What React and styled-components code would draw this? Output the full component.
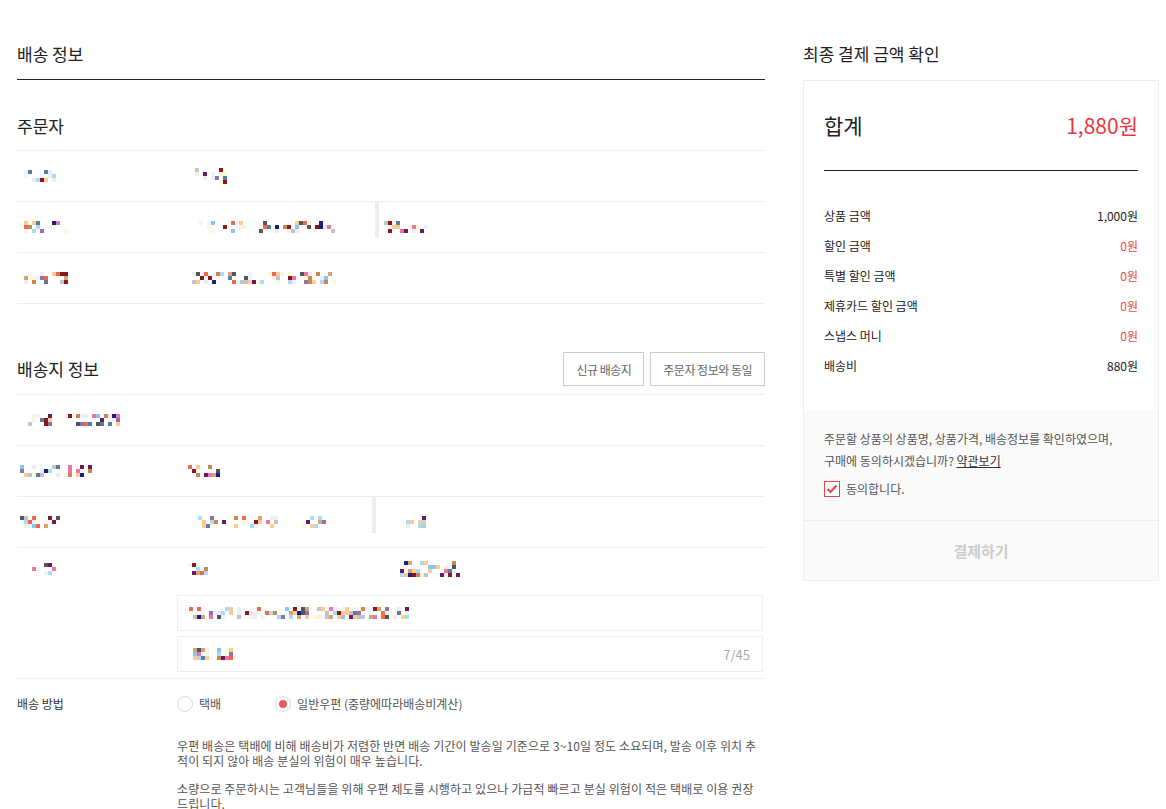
import React from 'react';
import styled, { createGlobalStyle } from 'styled-components';

const GlobalStyle = createGlobalStyle`
  html, body {
    margin: 0;
    padding: 0;
    background: #fff;
  }
  body {
    font-family: "Noto Sans CJK KR", "Noto Sans", sans-serif;
    color: #222;
  }
  * {
    box-sizing: border-box;
  }
`;

const palette = [
  '#8ac4f0', '#555555', '#f06848', '#fff6d6', '#ffcc90', '#1c1c8c',
  '#c4c4c4', '#6a1a60', '#8a1a1a', '#d8a474', '#5a7aa8', '#ec74a4',
  '#a8dcf8', '#c88850', '#9070b0', '#eeeeee', '#e8f4ff', '#f4f4f4',
  '#fff6d6', '#a8dcf8', '#ffcc90', '#eeeeee'
];

const makeRand = seed => {
  let a = seed * 9301 + 49297;
  return () => {
    a |= 0;
    a = (a + 0x6d2b79f5) | 0;
    let t = Math.imul(a ^ (a >>> 15), 1 | a);
    t = (t + Math.imul(t ^ (t >>> 7), 61 | t)) ^ t;
    return ((t ^ (t >>> 14)) >>> 0) / 4294967296;
  };
};

const Page = styled.div`
  display: flex;
  gap: 38px;
  padding: 42px 0 0 17px;
  width: 1166px;
  height: 809px;
  overflow: hidden;
`;

const Left = styled.div`
  width: 748px;
  flex-shrink: 0;
`;

const Right = styled.div`
  width: 356px;
  flex-shrink: 0;
`;

const PageTitle = styled.h2`
  margin: 0;
  font-size: 17px;
  font-weight: 400;
  line-height: 24px;
  color: #222;
  padding-bottom: ${p => (p.$line ? '13px' : '14px')};
  border-bottom: ${p => (p.$line ? '1px solid #222' : 'none')};
`;

const SectionTitle = styled.h3`
  margin: 0;
  font-size: 17px;
  font-weight: 400;
  line-height: 24px;
  color: #222;
`;

const OrdererHead = styled.div`
  margin-top: 34px;
  padding-bottom: 12px;
  border-bottom: 1px solid #eee;
`;

const ShipHead = styled.div`
  margin-top: 48px;
  display: flex;
  align-items: center;
  justify-content: space-between;
  padding-bottom: 8px;
  border-bottom: 1px solid #eee;
`;

const ButtonGroup = styled.div`
  display: flex;
  gap: 6px;
`;

const GhostButton = styled.button`
  height: 34px;
  padding: 0 12px;
  border: 1px solid #ccc;
  background: #fff;
  font-family: inherit;
  font-size: 12px;
  letter-spacing: -0.5px;
  color: #666;
  cursor: pointer;
`;

const Row = styled.div`
  display: grid;
  grid-template-columns: 160px 1fr;
  align-items: center;
  height: 51px;
  border-bottom: 1px solid #eee;
`;

const LabelCell = styled.div`
  padding-left: ${p => p.$pad || 7}px;
  display: flex;
  align-items: center;
  height: ${p => (p.$h ? `${p.$h}px` : 'auto')};
`;

const ValueCell = styled.div`
  display: flex;
  align-items: center;
  height: 100%;
  padding-left: ${p => p.$pad || 18}px;
`;

const Gap = styled.span`
  display: inline-block;
  width: ${p => p.$w}px;
  flex-shrink: 0;
`;

const Divider = styled.span`
  display: inline-block;
  width: 4px;
  height: 36px;
  background: #eee;
  align-self: flex-start;
`;

const AddressBlock = styled.div`
  display: grid;
  grid-template-columns: 160px 1fr;
  padding-bottom: 6px;
  border-bottom: 1px solid #eee;
`;

const AddressFields = styled.div`
  display: flex;
  flex-direction: column;
  gap: 5px;
  padding-right: 2px;
`;

const ZipLine = styled.div`
  height: 42px;
  display: flex;
  align-items: center;
  padding-left: 11px;
`;

const InputBox = styled.div`
  height: 36px;
  border: 1px solid #eee;
  display: flex;
  align-items: center;
  justify-content: space-between;
  padding: 0 12px 0 ${p => p.$pad || 11}px;
`;

const Counter = styled.span`
  font-size: 13px;
  color: #aaa;
`;

const MethodRow = styled.div`
  display: grid;
  grid-template-columns: 160px 1fr;
  align-items: center;
  height: 49px;
`;

const Label = styled.span`
  font-size: 12px;
  color: #333;
`;

const RadioGroup = styled.div`
  display: flex;
  align-items: center;
  gap: 54px;
`;

const RadioItem = styled.label`
  display: flex;
  align-items: center;
  gap: 6px;
  font-size: 12px;
  color: #555;
`;

const RadioCircle = styled.span`
  width: 16px;
  height: 16px;
  border-radius: 50%;
  border: 1px solid #ddd;
  background: #fff;
  display: flex;
  align-items: center;
  justify-content: center;
  &::after {
    content: '';
    width: 8px;
    height: 8px;
    border-radius: 50%;
    background: ${p => (p.$on ? '#e85a5a' : 'transparent')};
  }
`;

const Notice = styled.div`
  margin: 10px 0 0 160px;
  font-size: 12px;
  line-height: 15px;
  letter-spacing: 0.1px;
  color: #555;
  word-break: break-all;
  p {
    margin: 0 0 13px;
  }
`;

const SummaryBox = styled.div`
  border: 1px solid #eee;
  background: #fff;
`;

const SummaryInner = styled.div`
  padding: 0 20px;
`;

const TotalRow = styled.div`
  display: flex;
  justify-content: space-between;
  align-items: center;
  padding: 30px 0;
  line-height: 29px;
  border-bottom: 1px solid #222;
`;

const TotalLabel = styled.span`
  font-size: 21px;
  color: #222;
`;

const TotalValue = styled.span`
  font-size: 21px;
  color: #e8383d;
`;

const PriceList = styled.div`
  padding: 29px 0 30px;
`;

const PriceRow = styled.div`
  display: flex;
  justify-content: space-between;
  align-items: center;
  height: 30px;
  font-size: 12px;
  color: #222;
`;

const PriceValue = styled.span`
  color: ${p => (p.$red ? '#e84a4a' : '#222')};
`;

const AgreeArea = styled.div`
  background: #fafafa;
  padding: 18px 20px 23px;
`;

const AgreeText = styled.div`
  font-size: 12px;
  line-height: 22px;
  color: #555;
  a {
    color: #333;
    text-decoration: underline;
  }
`;

const CheckRow = styled.label`
  display: flex;
  align-items: center;
  gap: 6px;
  margin-top: 8px;
  font-size: 12px;
  color: #555;
`;

const CheckBox = styled.span`
  width: 16px;
  height: 16px;
  border: 1px solid #e84a4a;
  background: #fff;
  display: flex;
  align-items: center;
  justify-content: center;
`;

const PayButton = styled.button`
  display: block;
  width: 100%;
  height: 60px;
  border: none;
  border-top: 1px solid #eee;
  background: #fafafa;
  font-family: inherit;
  font-size: 15px;
  font-weight: 700;
  color: #ccc;
`;

const MosaicGrid = styled.span`
  display: inline-grid;
  grid-template-columns: repeat(${p => p.$cols}, 4px);
  grid-auto-rows: 4px;
  flex-shrink: 0;
`;

// pixelated placeholder for the blurred-out personal data
const Mosaic = ({ cols, rows = 3, seed, fill = 0.55 }) => {
  const rand = makeRand(seed);
  const cells = [];
  for (let i = 0; i < cols * rows; i++) {
    const on = rand() < fill;
    const c = palette[Math.floor(rand() * palette.length)];
    cells.push(<span key={i} style={{ background: on ? c : 'transparent' }} />);
  }
  return <MosaicGrid $cols={cols}>{cells}</MosaicGrid>;
};

const prices = [
  { label: '상품 금액', value: '1,000원' },
  { label: '할인 금액', value: '0원', red: true },
  { label: '특별 할인 금액', value: '0원', red: true },
  { label: '제휴카드 할인 금액', value: '0원', red: true },
  { label: '스냅스 머니', value: '0원', red: true },
  { label: '배송비', value: '880원' }
];

const Check = () => (
  <svg width="12" height="10" viewBox="0 0 12 10">
    <path d="M1.5 5 L4.5 8 L10.5 1.5" fill="none" stroke="#e84a4a" strokeWidth="2.2" />
  </svg>
);

const App = () => (
  <>
    <GlobalStyle />
    <Page>
      <Left>
        <PageTitle $line>배송 정보</PageTitle>

        <OrdererHead>
          <SectionTitle>주문자</SectionTitle>
        </OrdererHead>
        <Row>
          <LabelCell><Mosaic cols={8} seed={1} /></LabelCell>
          <ValueCell><Mosaic cols={8} rows={4} seed={2} /></ValueCell>
        </Row>
        <Row>
          <LabelCell><Mosaic cols={11} seed={3} /></LabelCell>
          <ValueCell>
            <Mosaic cols={35} seed={4} fill={0.3} />
            <Gap $w={40} />
            <Divider />
            <Gap $w={5} />
            <Mosaic cols={12} seed={5} fill={0.35} />
          </ValueCell>
        </Row>
        <Row>
          <LabelCell><Mosaic cols={11} seed={6} /></LabelCell>
          <ValueCell $pad={15}><Mosaic cols={36} seed={7} fill={0.45} /></ValueCell>
        </Row>

        <ShipHead>
          <SectionTitle>배송지 정보</SectionTitle>
          <ButtonGroup>
            <GhostButton>신규 배송지</GhostButton>
            <GhostButton>주문자 정보와 동일</GhostButton>
          </ButtonGroup>
        </ShipHead>
        <Row>
          <LabelCell $pad={3}><Mosaic cols={25} seed={8} fill={0.4} /></LabelCell>
          <ValueCell />
        </Row>
        <Row>
          <LabelCell $pad={3}><Mosaic cols={18} seed={9} fill={0.45} /></LabelCell>
          <ValueCell $pad={11}><Mosaic cols={8} seed={10} /></ValueCell>
        </Row>
        <Row>
          <LabelCell $pad={3}><Mosaic cols={12} seed={11} fill={0.45} /></LabelCell>
          <ValueCell $pad={13}>
            <Mosaic cols={34} seed={12} fill={0.3} />
            <Gap $w={46} />
            <Divider />
            <Gap $w={22} />
            <Mosaic cols={7} seed={13} fill={0.4} />
          </ValueCell>
        </Row>
        <AddressBlock>
          <LabelCell $pad={3} $h={42}><Mosaic cols={9} seed={14} fill={0.35} /></LabelCell>
          <AddressFields>
            <ZipLine>
              <Mosaic cols={5} seed={15} />
              <Gap $w={188} />
              <Mosaic cols={16} rows={4} seed={16} fill={0.45} />
            </ZipLine>
            <InputBox>
              <Mosaic cols={56} seed={17} fill={0.6} />
            </InputBox>
            <InputBox $pad={15}>
              <Mosaic cols={10} seed={18} fill={0.8} />
              <Counter>7/45</Counter>
            </InputBox>
          </AddressFields>
        </AddressBlock>

        <MethodRow>
          <Label>배송 방법</Label>
          <RadioGroup>
            <RadioItem>
              <RadioCircle />
              택배
            </RadioItem>
            <RadioItem>
              <RadioCircle $on />
              일반우편 (중량에따라배송비계산)
            </RadioItem>
          </RadioGroup>
        </MethodRow>
        <Notice>
          <p>
            우편 배송은 택배에 비해 배송비가 저렴한 반면 배송 기간이 발송일 기준으로 3~10일 정도 소요되며, 발송 이후 위치 추적이 되지 않아 배송 분실의 위험이 매우 높습니다.
          </p>
          <p>
            소량으로 주문하시는 고객님들을 위해 우편 제도를 시행하고 있으나 가급적 빠르고 분실 위험이 적은 택배로 이용 권장 드립니다.
          </p>
        </Notice>
      </Left>

      <Right>
        <PageTitle>최종 결제 금액 확인</PageTitle>
        <SummaryBox>
          <SummaryInner>
            <TotalRow>
              <TotalLabel>합계</TotalLabel>
              <TotalValue>1,880원</TotalValue>
            </TotalRow>
            <PriceList>
              {prices.map(p => (
                <PriceRow key={p.label}>
                  <span>{p.label}</span>
                  <PriceValue $red={p.red}>{p.value}</PriceValue>
                </PriceRow>
              ))}
            </PriceList>
          </SummaryInner>
          <AgreeArea>
            <AgreeText>
              주문할 상품의 상품명, 상품가격, 배송정보를 확인하였으며,
              <br />
              구매에 동의하시겠습니까? <a>약관보기</a>
            </AgreeText>
            <CheckRow>
              <CheckBox><Check /></CheckBox>
              동의합니다.
            </CheckRow>
          </AgreeArea>
          <PayButton>결제하기</PayButton>
        </SummaryBox>
      </Right>
    </Page>
  </>
);

export default App;
